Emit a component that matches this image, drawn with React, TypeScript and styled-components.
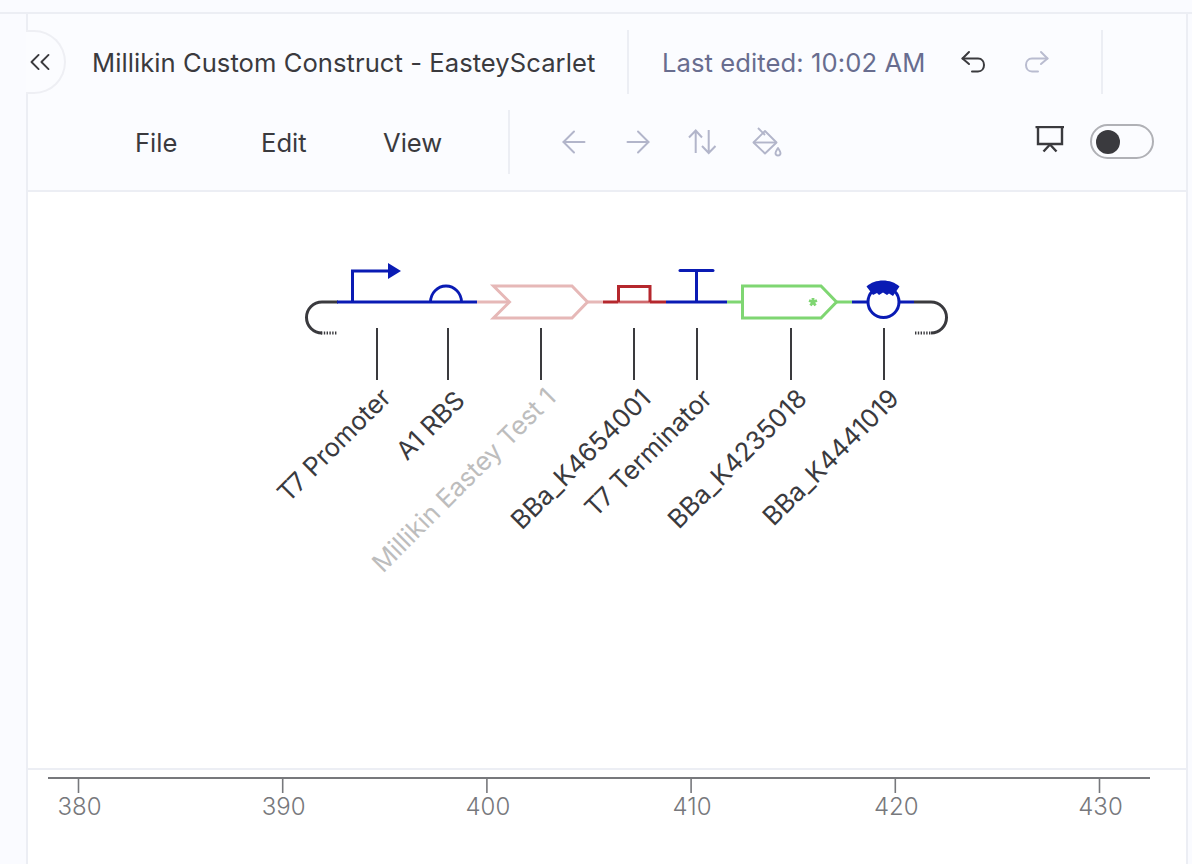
import React from "react";
import styled, { createGlobalStyle } from "styled-components";
import { ArrowLeft, ArrowRight, ChevronsLeft } from "lucide-react";

const Global = createGlobalStyle`
  html, body { margin: 0; padding: 0; height: 100%; background: #fafbff; }
  body { font-family: Inter, "Noto Sans", sans-serif; overflow: hidden; }
  #root { height: 100%; }
`;

const Page = styled.div`
  width: 1192px;
  height: 864px;
  display: flex;
  flex-direction: column;
  background: #fafbff;
  overflow: hidden;
`;

const TopStrip = styled.div`
  height: 12px;
  flex: none;
  border-bottom: 2px solid #eceef4;
`;

const Shell = styled.div`
  flex: 1;
  min-height: 0;
  display: flex;
  flex-direction: column;
  margin: 0 4px 0 26px;
  position: relative;
  border-left: 2px solid #eceef4;
  border-right: 2px solid #eceef4;
`;

const Collapse = styled.button`
  position: absolute;
  left: -2px;
  top: 16px;
  width: 40px;
  height: 64px;
  box-sizing: border-box;
  padding: 0;
  border: 2px solid #eeeff4;
  border-left: none;
  border-radius: 0 32px 32px 0;
  background: #fbfcff;
  color: #3a3a3e;
  display: flex;
  align-items: center;
  justify-content: flex-start;
`;

const CollapseIcon = styled(ChevronsLeft)`
  flex: none;
  margin-left: -3px;
`;

const Header = styled.header`
  height: 178px;
  flex: none;
  box-sizing: border-box;
  background: #fbfcff;
  border-bottom: 2px solid #eceef4;
  display: flex;
  flex-direction: column;
`;

const Row = styled.div`
  height: 64px;
  margin-top: 16px;
  flex: none;
  display: flex;
  align-items: center;
`;

const Title = styled.div`
  margin-left: 64px;
  width: 535px;
  font-size: 25.6px;
  letter-spacing: 0.05px;
  color: #3a3a3e;
  white-space: nowrap;
`;

const Divider = styled.div`
  width: 2px;
  height: 64px;
  background: #eceef4;
  flex: none;
`;

const Edited = styled.div`
  margin-left: 33px;
  width: 296px;
  font-size: 25.6px;
  letter-spacing: 0.08px;
  color: #686d8f;
  white-space: nowrap;
`;

const IconSlot = styled.div<{ $w: number }>`
  width: ${(p) => p.$w}px;
  height: 32px;
  flex: none;
  display: flex;
  align-items: center;
  justify-content: center;
`;

const Spacer = styled.div<{ $w: number }>`
  width: ${(p) => p.$w}px;
  flex: none;
`;

const Menu = styled.nav`
  margin-left: 107px;
  width: 373px;
  display: flex;
  font-size: 25.6px;
  color: #3a3a3e;
`;

const MenuItem = styled.div<{ $w: number }>`
  width: ${(p) => p.$w}px;
  flex: none;
`;

const Tools = styled.div`
  margin-left: 32px;
  display: flex;
  align-items: center;
  color: #b2b5ca;
`;

const Right = styled.div`
  margin-left: auto;
  margin-right: 32px;
  display: flex;
  align-items: center;
  gap: 25px;
`;

const Toggle = styled.div`
  width: 64px;
  height: 35px;
  margin-bottom: 2px;
  box-sizing: border-box;
  border: 2px solid #b0b1b6;
  border-radius: 18px;
  padding: 4px;
`;

const Knob = styled.div`
  width: 24px;
  height: 24px;
  border-radius: 50%;
  background: #3a3a3e;
`;

const Canvas = styled.main`
  flex: 1;
  min-height: 0;
  background: #fff;
`;

const DiagramSvg = styled.svg`
  display: block;
  width: 1158px;
  height: 576px;
`;

const Ruler = styled.svg`
  display: block;
  width: 1158px;
  height: 94px;
  border-top: 2px solid #eceef4;
`;

const Label = styled.text<{ $muted?: boolean }>`
  font-family: Inter, "Liberation Sans", sans-serif;
  font-size: 25.6px;
  fill: ${(p) => (p.$muted ? "#bdbdbd" : "#3a3a3e")};
`;

const RulerLabel = styled.text`
  font-family: Inter, sans-serif;
  font-size: 24px;
  font-weight: 300;
  fill: #77787c;
`;

const BLUE = "#0a1bb4";
const PINK = "#e6b8b7";
const RED = "#b5272d";
const GREEN = "#7fd672";
const DARK = "#3a3a3e";

const labels: { x: number; ex: number; ey: number; t: string; m?: boolean }[] = [
  { x: 377, ex: 384, ey: 385, t: "T7 Promoter" },
  { x: 448, ex: 458, ey: 388, t: "A1 RBS" },
  { x: 541, ex: 549, ey: 385, t: "Millikin Eastey Test 1", m: true },
  { x: 634, ex: 644, ey: 386, t: "BBa_K4654001" },
  { x: 697, ex: 705, ey: 386, t: "T7 Terminator" },
  { x: 791, ex: 800, ey: 386, t: "BBa_K4235018" },
  { x: 884, ex: 892, ey: 386, t: "BBa_K4441019" },
];

const ticks = [380, 390, 400, 410, 420, 430];

const Diagram = () => (
  <DiagramSvg viewBox="28 192 1158 576" fill="none" strokeWidth={2.8}>
    <path d="M338 302H322A15.5 15.5 0 0 0 322 333" stroke={DARK} strokeWidth={3} />
    <path d="M321 333H337" stroke={DARK} strokeWidth={3} strokeDasharray="1.4 1.4" />
    <path d="M337 302H477" stroke={BLUE} />
    <path d="M352.5 302V271H389" stroke={BLUE} strokeWidth={3} />
    <path d="M388 263L401 271L388 279Z" fill={BLUE} />
    <path d="M430.5 302A15.5 16 0 0 1 461.5 302" stroke={BLUE} strokeWidth={2.8} />
    <path d="M477 302H509M587 302H603" stroke={PINK} />
    <path d="M493.5 286H572L587.5 302L572 318H493.5L509.5 302Z" stroke={PINK} strokeWidth={3} />
    <path d="M603 302H618M650 302H666" stroke={RED} />
    <path d="M618 302H650" stroke="#cf6a6e" />
    <path d="M618.5 302V286.5H650V302" stroke={RED} strokeWidth={3} />
    <path d="M666 302H727" stroke={BLUE} />
    <path d="M696.5 302V270" stroke={BLUE} strokeWidth={3} />
    <path d="M680 270.5H713" stroke={BLUE} strokeWidth={3} strokeLinecap="round" />
    <path d="M727 302H742M836 302H852" stroke={GREEN} />
    <path d="M742.5 286H821L836.5 302L821 318H742.5Z" stroke={GREEN} strokeWidth={3} />
    <path d="M813 298V302M813 302L817 300.500M813 302L809 300.500M813 302L815.500 305.500M813 302L810.500 305.500" stroke={GREEN} strokeWidth={2.8} />
    <path d="M852 302H868M899 302H914" stroke={BLUE} />
    <circle cx="883.5" cy="302" r="15.5" stroke={BLUE} strokeWidth={3} />
    <path d="M866.5 286.5C875 278.500 891 278.500 899.500 286.500L893 296L889 293.500L887 295L883 292.500L879 295L877 293L873 295Z" fill={BLUE} />
    <path d="M914 302H931A15.5 15.5 0 0 1 931 333" stroke={DARK} strokeWidth={3} />
    <path d="M915 333H931" stroke={DARK} strokeWidth={3} strokeDasharray="1.4 1.4" />
    {labels.map((l) => (
      <g key={l.t}>
        <path d={`M${l.x} 328V380`} stroke={DARK} strokeWidth={2} />
        <Label
          $muted={l.m}
          x={l.ex}
          y={l.ey}
          textAnchor="end"
          transform={`rotate(-45 ${l.ex} ${l.ey}) translate(-4 16)`}
        >
          {l.t}
        </Label>
      </g>
    ))}
  </DiagramSvg>
);

export default function App() {
  return (
    <Page>
      <Global />
      <TopStrip />
      <Shell>
        <Collapse aria-label="Collapse">
          <CollapseIcon size={34} strokeWidth={1.35} />
        </Collapse>
        <Header>
          <Row>
            <Title>Millikin Custom Construct - EasteyScarlet</Title>
            <Divider />
            <Edited>Last edited: 10:02 AM</Edited>
            <IconSlot $w={32}>
              <svg width="28" height="28" viewBox="0 0 28 28" fill="none" stroke="#3a3a3e" strokeWidth="2" strokeLinecap="round" strokeLinejoin="round">
                <path d="M9 4L2.5 10.5L9 16" />
                <path d="M2.5 10.5H18C26 10.5 26 23.5 18 23.5H12" />
              </svg>
            </IconSlot>
            <Spacer $w={30} />
            <IconSlot $w={32}>
              <svg width="28" height="28" viewBox="0 0 28 28" fill="none" stroke="#b9bcd0" strokeWidth="2" strokeLinecap="round" strokeLinejoin="round">
                <path d="M19 4L25.5 10.5L19 16" />
                <path d="M25.5 10.5H10C2 10.5 2 23.5 10 23.5H16" />
              </svg>
            </IconSlot>
            <Spacer $w={49} />
            <Divider />
          </Row>
          <Row>
            <Menu>
              <MenuItem $w={126}>File</MenuItem>
              <MenuItem $w={122}>Edit</MenuItem>
              <MenuItem $w={90}>View</MenuItem>
            </Menu>
            <Divider />
            <Tools>
              <IconSlot $w={64}>
                <ArrowLeft size={36} strokeWidth={1.3} />
              </IconSlot>
              <IconSlot $w={64}>
                <ArrowRight size={36} strokeWidth={1.3} />
              </IconSlot>
              <IconSlot $w={64}>
                <svg width="32" height="32" viewBox="0 0 32 32" fill="none" stroke="currentColor" strokeWidth="2">
                  <path d="M9.7 27V5M3 11.500L9.700 4.500L16 11.500" />
                  <path d="M22.700 4V26M16 20L22.700 27L29.500 20" />
                </svg>
              </IconSlot>
              <IconSlot $w={64}>
                <svg width="32" height="32" viewBox="0 0 32 32" fill="none" stroke="currentColor" strokeWidth="1.9" strokeLinejoin="round">
                  <path d="M8 2L15 9" />
                  <path d="M15 5L26.500 16.500L15 27.500L3.500 16.500Z" />
                  <path d="M3.500 16.500H26.500" />
                  <path d="M28 22C26.500 24.500 25.500 25.500 25.500 27A2.500 2.500 0 0 0 30.500 27C30.500 25.500 29.500 24.500 28 22Z" />
                </svg>
              </IconSlot>
            </Tools>
            <Right>
              <svg width="30" height="32" viewBox="0 0 30 32" fill="none" stroke="#3a3a3e" strokeWidth="2.4">
                <path d="M0.500 1H29" />
                <path d="M3 1V18H27V1" />
                <path d="M15 18.500L8.500 25.500M15 18.500L21.500 25.500" />
              </svg>
              <Toggle>
                <Knob />
              </Toggle>
            </Right>
          </Row>
        </Header>
        <Canvas>
          <Diagram />
          <Ruler viewBox="28 770 1158 94" fill="none">
            <path d="M48 778H1150" stroke="#77787c" strokeWidth={2} />
            {ticks.map((t, i) => {
              const x = 78.5 + i * 204.2;
              return (
                <g key={t}>
                  <path d={`M${x} 778V793`} stroke="#77787c" strokeWidth={1.6} />
                  <RulerLabel x={x + 1} y={815} textAnchor="middle">
                    {t}
                  </RulerLabel>
                </g>
              );
            })}
          </Ruler>
        </Canvas>
      </Shell>
    </Page>
  );
}
